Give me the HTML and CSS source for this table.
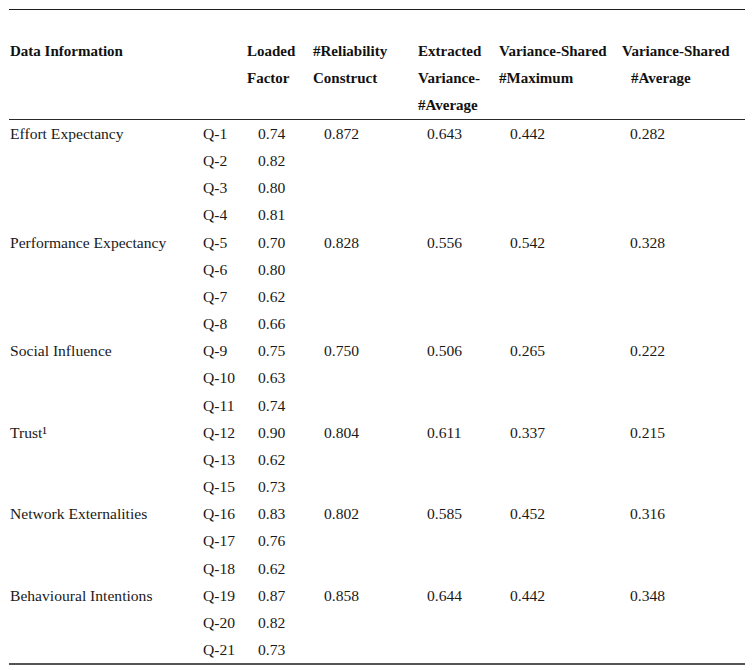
FILE: index.html
```html
<!DOCTYPE html>
<html>
<head>
<meta charset="utf-8">
<link rel="stylesheet" href="styles.css">
</head>
<body>
<table class="tbl">
  <colgroup>
    <col class="c1"><col class="c2"><col class="c3"><col class="c4"><col class="c5"><col class="c6"><col class="c7">
  </colgroup>
  <thead>
    <tr>
      <th class="lbl">Data Information</th>
      <th></th>
      <th>Loaded<br>Factor</th>
      <th>#Reliability<br>Construct</th>
      <th>Extracted<br>Variance-<br>#Average</th>
      <th>Variance-Shared<br>#Maximum</th>
      <th class="last">Variance-Shared<br><span class="ind">#Average</span></th>
    </tr>
  </thead>
  <tbody>
    <tr><td class="lbl">Effort Expectancy</td><td>Q-1</td><td class="v3">0.74</td><td class="v4">0.872</td><td class="v5">0.643</td><td class="v6">0.442</td><td class="v7">0.282</td></tr>
    <tr><td></td><td>Q-2</td><td class="v3">0.82</td><td></td><td></td><td></td><td></td></tr>
    <tr><td></td><td>Q-3</td><td class="v3">0.80</td><td></td><td></td><td></td><td></td></tr>
    <tr><td></td><td>Q-4</td><td class="v3">0.81</td><td></td><td></td><td></td><td></td></tr>
    <tr><td class="lbl">Performance Expectancy</td><td>Q-5</td><td class="v3">0.70</td><td class="v4">0.828</td><td class="v5">0.556</td><td class="v6">0.542</td><td class="v7">0.328</td></tr>
    <tr><td></td><td>Q-6</td><td class="v3">0.80</td><td></td><td></td><td></td><td></td></tr>
    <tr><td></td><td>Q-7</td><td class="v3">0.62</td><td></td><td></td><td></td><td></td></tr>
    <tr><td></td><td>Q-8</td><td class="v3">0.66</td><td></td><td></td><td></td><td></td></tr>
    <tr><td class="lbl">Social Influence</td><td>Q-9</td><td class="v3">0.75</td><td class="v4">0.750</td><td class="v5">0.506</td><td class="v6">0.265</td><td class="v7">0.222</td></tr>
    <tr><td></td><td>Q-10</td><td class="v3">0.63</td><td></td><td></td><td></td><td></td></tr>
    <tr><td></td><td>Q-11</td><td class="v3">0.74</td><td></td><td></td><td></td><td></td></tr>
    <tr><td class="lbl">Trust¹</td><td>Q-12</td><td class="v3">0.90</td><td class="v4">0.804</td><td class="v5">0.611</td><td class="v6">0.337</td><td class="v7">0.215</td></tr>
    <tr><td></td><td>Q-13</td><td class="v3">0.62</td><td></td><td></td><td></td><td></td></tr>
    <tr><td></td><td>Q-15</td><td class="v3">0.73</td><td></td><td></td><td></td><td></td></tr>
    <tr><td class="lbl">Network Externalities</td><td>Q-16</td><td class="v3">0.83</td><td class="v4">0.802</td><td class="v5">0.585</td><td class="v6">0.452</td><td class="v7">0.316</td></tr>
    <tr><td></td><td>Q-17</td><td class="v3">0.76</td><td></td><td></td><td></td><td></td></tr>
    <tr><td></td><td>Q-18</td><td class="v3">0.62</td><td></td><td></td><td></td><td></td></tr>
    <tr><td class="lbl">Behavioural Intentions</td><td>Q-19</td><td class="v3">0.87</td><td class="v4">0.858</td><td class="v5">0.644</td><td class="v6">0.442</td><td class="v7">0.348</td></tr>
    <tr><td></td><td>Q-20</td><td class="v3">0.82</td><td></td><td></td><td></td><td></td></tr>
    <tr><td></td><td>Q-21</td><td class="v3">0.73</td><td></td><td></td><td></td><td></td></tr>
  </tbody>
</table>
</body>
</html>
```

FILE: styles.css
```css
html, body {
  margin: 0;
  padding: 0;
  background: #ffffff;
}

body {
  font-family: "Liberation Serif", "Times New Roman", serif;
  font-size: 15px;
  color: #1a1a1a;
}

.tbl {
  margin: 9px 0 0 9px;
  width: 736px;
  border-collapse: collapse;
  table-layout: fixed;
  border-top: 1px solid #1e1e1e;
  border-bottom: 2px solid #555555;
}

.c1 { width: 194px; }
.c2 { width: 44px; }
.c3 { width: 66px; }
.c4 { width: 105px; }
.c5 { width: 81px; }
.c6 { width: 121px; }
.c7 { width: 125px; }

.tbl thead tr {
  border-bottom: 1px solid #2a2a2a;
}

.tbl th {
  text-align: left;
  vertical-align: top;
  font-weight: bold;
  line-height: 27px;
  padding: 28px 0 0 0;
  white-space: nowrap;
  color: #111111;
}

.tbl th.last {
  padding-left: 2px;
}

.ind {
  padding-left: 9px;
}

.tbl td {
  padding: 0;
  height: 27.15px;
  line-height: 27.15px;
  font-size: 15.6px;
  vertical-align: middle;
  white-space: nowrap;
}

.lbl {
  padding-left: 1px !important;
}

.v3 { padding-left: 11px !important; }
.v4 { padding-left: 11px !important; }
.v5 { padding-left: 9px !important; }
.v6 { padding-left: 11px !important; }
.v7 { padding-left: 10px !important; }
```
